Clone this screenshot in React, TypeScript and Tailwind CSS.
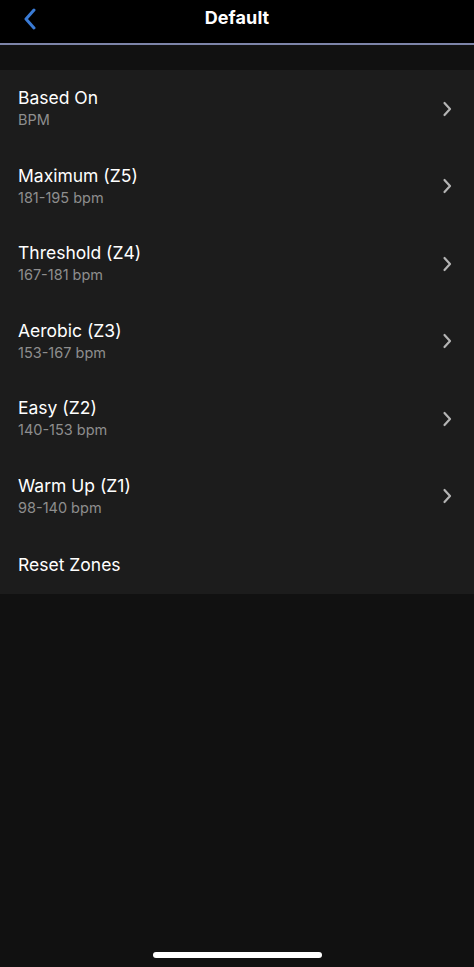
const ZONES = [
  { title: "Based On", detail: "BPM" },
  { title: "Maximum (Z5)", detail: "181-195 bpm" },
  { title: "Threshold (Z4)", detail: "167-181 bpm" },
  { title: "Aerobic (Z3)", detail: "153-167 bpm" },
  { title: "Easy (Z2)", detail: "140-153 bpm" },
  { title: "Warm Up (Z1)", detail: "98-140 bpm" },
];

function Chevron() {
  return (
    <svg className="h-[16px] w-[10px] text-[#b4b4b4]" viewBox="0 0 10 16" fill="none" stroke="currentColor" strokeWidth={2.2} strokeLinecap="round" strokeLinejoin="round">
      <path d="M2.5 2l5.5 6-5.5 6" />
    </svg>
  );
}

export default function App() {
  return (
    <div className="flex min-h-[967px] flex-col bg-[#111111] font-['Inter','Liberation_Sans',sans-serif] text-white">
      {/* Nav bar */}
      <header className="relative flex h-[43px] items-start justify-center bg-black pt-[6px]">
        <button className="absolute left-[22px] top-[8px] text-[#3a7bd5]">
          <svg className="h-[22px] w-[16px]" viewBox="0 0 16 22" fill="none" stroke="currentColor" strokeWidth={3} strokeLinecap="round" strokeLinejoin="round">
            <path d="M12 2L4 11l8 9" />
          </svg>
        </button>
        <h1 className="text-[18px] font-bold leading-[24px] tracking-[0.1px]">Default</h1>
      </header>
      <div className="h-[2px] bg-[#7d84a8]" />

      <div className="h-[25px]" />

      {/* Zone list */}
      <div className="bg-[#1c1c1c]">
        {ZONES.map((zone) => (
          <div key={zone.title} className="flex h-[77.5px] items-center justify-between pl-[18px] pr-[22px]">
            <div className="flex flex-col gap-[1px] pb-[1px]">
              <span className="text-[17.5px] leading-[22px]">{zone.title}</span>
              <span className="text-[14.5px] leading-[19px] text-[#8e8e8e]">{zone.detail}</span>
            </div>
            <Chevron />
          </div>
        ))}
        <div className="flex h-[59px] items-center pl-[18px]">
          <span className="text-[17.5px] leading-[22px]">Reset Zones</span>
        </div>
      </div>

      <div className="flex-1" />

      {/* Home indicator */}
      <div className="flex justify-center pb-[9px]">
        <div className="h-[6px] w-[169px] rounded-full bg-white" />
      </div>
    </div>
  );
}
